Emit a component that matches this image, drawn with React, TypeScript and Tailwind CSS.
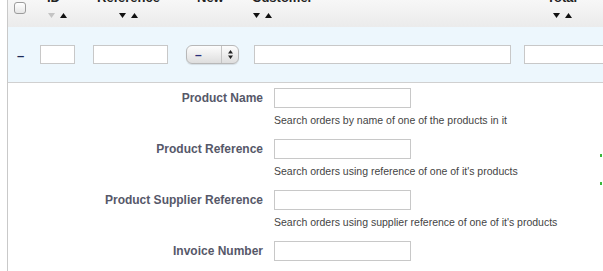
import React from 'react';

const SortArrows = ({ downMuted = false }: { downMuted?: boolean }) => (
  <div className="flex items-center gap-[5px]">
    <svg width="7" height="5" viewBox="0 0 7 5">
      <path d="M0 0 H7 L3.5 5 Z" fill={downMuted ? '#c4c4c4' : '#111'} />
    </svg>
    <svg width="7" height="5" viewBox="0 0 7 5">
      <path d="M0 5 H7 L3.5 0 Z" fill="#111" />
    </svg>
  </div>
);

const HeaderCell = ({
  label,
  width,
  textPad,
  arrowPad,
  downMuted,
}: {
  label: string;
  width: string;
  textPad: string;
  arrowPad: string;
  downMuted?: boolean;
}) => (
  <div className={`${width} shrink-0 flex flex-col`}>
    <div className={`${textPad} mt-[-9px] h-[13px] leading-[13px] text-[13px] font-bold text-[#222] whitespace-nowrap`}>
      {label}
    </div>
    <div className={`${arrowPad} mt-[9px]`}>
      <SortArrows downMuted={downMuted} />
    </div>
  </div>
);

const FilterInput = ({ className }: { className: string }) => (
  <input
    type="text"
    className={`${className} h-[19px] bg-white border border-[#c8c8c8] outline-none`}
  />
);

const fields = [
  { label: 'Product Name', help: 'Search orders by name of one of the products in it' },
  { label: 'Product Reference', help: "Search orders using reference of one of it's products" },
  {
    label: 'Product Supplier Reference',
    help: "Search orders using supplier reference of one of it's products",
  },
  { label: 'Invoice Number', help: '' },
];

export default function App() {
  return (
    <div className="relative w-[603px] h-[271px] overflow-hidden bg-white font-['Liberation_Sans',Arial,sans-serif]">
      <div className="ml-[7px] w-[700px] h-full border-l border-[#c9c9c9]">
        {/* Header Row */}
        <div className="flex h-[27px] bg-gradient-to-b from-[#f7f7f7] to-[#ebebeb] overflow-hidden">
          <div className="w-[26px] shrink-0 pl-[6px] pt-[2px]">
            <div className="w-[12px] h-[12px] rounded-[3px] border border-[#9c9c9c] bg-gradient-to-b from-white to-[#e6e6e6]" />
          </div>
          <HeaderCell label="ID" width="w-[51px]" textPad="pl-[13px]" arrowPad="pl-[14px]" downMuted />
          <HeaderCell label="Reference" width="w-[93px]" textPad="pl-[12px]" arrowPad="pl-[34px]" />
          <HeaderCell label="New" width="w-[69px]" textPad="pl-[19px]" arrowPad="pl-[19px] invisible" />
          <HeaderCell label="Customer" width="w-[270px]" textPad="pl-[5px]" arrowPad="pl-[6px]" />
          <HeaderCell label="Total" width="w-[100px]" textPad="pl-[30px]" arrowPad="pl-[36px]" />
        </div>

        {/* Filter Row */}
        <div className="flex items-center h-[56px] bg-[#edf7fd] border-b border-[#d0d0d0]">
          <div className="w-[26px] shrink-0 pl-[9px] pt-[1px] text-[13px] leading-none font-bold text-[#1d2a5a]">
            –
          </div>
          <div className="w-[51px] shrink-0 pl-[6px]">
            <FilterInput className="w-[35px]" />
          </div>
          <div className="w-[93px] shrink-0 pl-[8px]">
            <FilterInput className="w-[75px]" />
          </div>
          <div className="w-[69px] shrink-0 pl-[8px]">
            <div className="flex items-center w-[53px] h-[19px] rounded-[6px] border border-[#b8b8b8] bg-gradient-to-b from-[#fdfdfd] to-[#dedede] shadow-[0_1px_1px_rgba(0,0,0,0.1)]">
              <div className="w-[34px] pl-[8px] text-[12px] leading-none font-bold text-[#2a2f7a]">–</div>
              <div className="h-full border-l border-[#c4c4c4]" />
              <div className="flex-1 flex justify-center">
                <svg width="5" height="9" viewBox="0 0 5 9">
                  <path d="M0 3.5 H5 L2.5 0 Z M0 5.5 H5 L2.5 9 Z" fill="#222" />
                </svg>
              </div>
            </div>
          </div>
          <div className="w-[270px] shrink-0 pl-[7px]">
            <FilterInput className="w-[257px]" />
          </div>
          <div className="w-[100px] shrink-0 pl-[7px]">
            <FilterInput className="w-[90px]" />
          </div>
        </div>

        {/* Search Fields */}
        <div className="flex flex-col pt-[5px]">
          {fields.map((f) => (
            <div key={f.label} className="flex h-[51px]">
              <div className="w-[266px] shrink-0 pr-[11px] pt-[3px] text-right text-[12px] leading-[14px] font-bold text-[#565869] whitespace-nowrap">
                {f.label}
              </div>
              <div className="flex flex-col">
                <input
                  type="text"
                  className="w-[137px] h-[20px] bg-white border border-[#c8c8c8] outline-none"
                />
                {f.help && (
                  <div className="mt-[6px] text-[10.5px] leading-[12px] text-[#444] whitespace-nowrap">
                    {f.help}
                  </div>
                )}
              </div>
            </div>
          ))}
        </div>
      </div>

      {/* clipped edge marks */}
      <div className="absolute left-[600px] top-[154px] w-[2px] h-[3px] bg-[#3cb83c]" />
      <div className="absolute left-[600px] top-[182px] w-[2px] h-[3px] bg-[#3cb83c]" />
    </div>
  );
}
